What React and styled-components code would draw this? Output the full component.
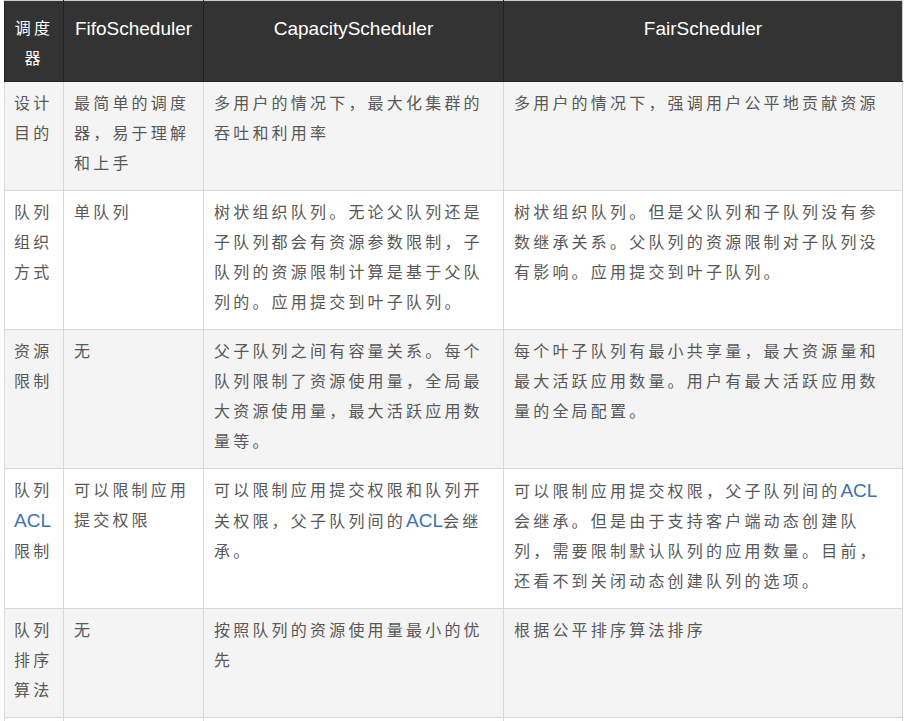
import React from 'react';
import styled, { createGlobalStyle } from 'styled-components';

const GlobalStyle = createGlobalStyle`
  html, body {
    margin: 0;
    padding: 0;
    background: #fff;
  }
  body {
    font-family: "Liberation Sans", "Noto Sans CJK SC", sans-serif;
  }
`;

const Table = styled.table`
  margin: 0 0 0 4px;
  width: 898px;
  table-layout: fixed;
  border-collapse: collapse;
  font-size: 16px;
  line-height: 30px;
  letter-spacing: 3.2px;
  color: #585858;
`;

const HeadCell = styled.th`
  background: #333;
  color: #fff;
  font-weight: normal;
  text-align: center;
  vertical-align: top;
  padding: 13px ${p => (p.narrow ? '9px' : '10px')} 7px;
  border: 1px solid #222;
  border-top-color: #ccc;
  &:last-child {
    border-right-color: #ccc;
  }
`;

const Row = styled.tr`
  background: ${p => (p.shaded ? '#f4f4f4' : '#fff')};
`;

const Cell = styled.td`
  vertical-align: top;
  text-align: left;
  padding: 7px ${p => (p.narrow ? '9px' : '10px')} 11px;
  border: 1px solid #d8d8d8;
  height: ${p => p.h || 'auto'};
`;

const Latin = styled.span`
  font-size: 19px;
  letter-spacing: 0;
  color: ${p => (p.link ? '#3a72b8' : 'inherit')};
`;

const acl = <Latin link>ACL</Latin>;

const rows = [
  {
    name: '设计目的',
    fifo: '最简单的调度器，易于理解和上手',
    capacity: '多用户的情况下，最大化集群的吞吐和利用率',
    fair: '多用户的情况下，强调用户公平地贡献资源',
  },
  {
    name: '队列组织方式',
    fifo: '单队列',
    capacity: '树状组织队列。无论父队列还是子队列都会有资源参数限制，子队列的资源限制计算是基于父队列的。应用提交到叶子队列。',
    fair: '树状组织队列。但是父队列和子队列没有参数继承关系。父队列的资源限制对子队列没有影响。应用提交到叶子队列。',
  },
  {
    name: '资源限制',
    fifo: '无',
    capacity: '父子队列之间有容量关系。每个队列限制了资源使用量，全局最大资源使用量，最大活跃应用数量等。',
    fair: '每个叶子队列有最小共享量，最大资源量和最大活跃应用数量。用户有最大活跃应用数量的全局配置。',
  },
  {
    name: <>队列{acl}限制</>,
    fifo: '可以限制应用提交权限',
    capacity: <>可以限制应用提交权限和队列开关权限，父子队列间的{acl}会继承。</>,
    fair: <>可以限制应用提交权限，父子队列间的{acl}会继承。但是由于支持客户端动态创建队列，需要限制默认队列的应用数量。目前，还看不到关闭动态创建队列的选项。</>,
  },
  {
    name: '队列排序算法',
    fifo: '无',
    capacity: '按照队列的资源使用量最小的优先',
    fair: '根据公平排序算法排序',
  },
];

export default function App() {
  return (
    <>
      <GlobalStyle />
      <Table>
        <colgroup>
          <col style={{ width: 59 }} />
          <col style={{ width: 140 }} />
          <col style={{ width: 300 }} />
          <col style={{ width: 399 }} />
        </colgroup>
        <thead>
          <tr>
            <HeadCell narrow>调度器</HeadCell>
            <HeadCell><Latin>FifoScheduler</Latin></HeadCell>
            <HeadCell><Latin>CapacityScheduler</Latin></HeadCell>
            <HeadCell><Latin>FairScheduler</Latin></HeadCell>
          </tr>
        </thead>
        <tbody>
          {rows.map((r, i) => (
            <Row key={i} shaded={i % 2 === 0}>
              <Cell narrow>{r.name}</Cell>
              <Cell>{r.fifo}</Cell>
              <Cell>{r.capacity}</Cell>
              <Cell>{r.fair}</Cell>
            </Row>
          ))}
          <Row>
            <Cell narrow h="60px" />
            <Cell />
            <Cell />
            <Cell />
          </Row>
        </tbody>
      </Table>
    </>
  );
}
